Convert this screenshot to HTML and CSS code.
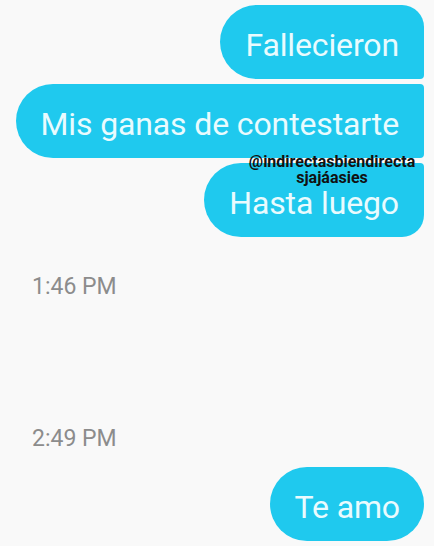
FILE: index.html
```html
<!DOCTYPE html>
<html lang="es">
<head>
<meta charset="utf-8">
<title>Chat</title>
<link rel="stylesheet" href="styles.css">
</head>
<body>
<main class="chat">
  <div class="group">
    <div class="bubble first"><span class="msg">Fallecieron</span></div>
    <div class="bubble middle"><span class="msg">Mis ganas de contestarte</span></div>
    <div class="bubble last"><span class="msg">Hasta luego</span></div>
    <div class="watermark">
      <div class="wm-line">@indirectasbiendirecta</div>
      <div class="wm-line">sjajáasies</div>
    </div>
  </div>
  <div class="time time-a">1:46 PM</div>
  <div class="time time-b">2:49 PM</div>
  <div class="group">
    <div class="bubble single"><span class="msg">Te amo</span></div>
  </div>
</main>
</body>
</html>
```
FILE: styles.css
```css
html, body {
  margin: 0;
  padding: 0;
  background: #f9f9f9;
}
.chat {
  font-family: Roboto, "Noto Sans", "Liberation Sans", sans-serif;
  padding: 5px 10px 0 0;
  display: flex;
  flex-direction: column;
}
.group {
  position: relative;
  display: flex;
  flex-direction: column;
  align-items: flex-end;
  gap: 5px;
}
.bubble {
  box-sizing: border-box;
  height: 74px;
  display: flex;
  align-items: center;
  padding: 6px 25px 0 25px;
  background: #1fc9ee;
  color: #e9fbfe;
  font-size: 32px;
  letter-spacing: -0.13px;
  border-radius: 37px;
}
.msg {
  line-height: 24px;
  white-space: nowrap;
}
.first { border-radius: 37px 22px 4px 37px; }
.middle { border-radius: 37px 4px 4px 37px; }
.last { border-radius: 37px 4px 22px 37px; }
.single { border-radius: 37px; padding-left: 25px; padding-right: 24px; }
.watermark {
  position: absolute;
  left: 236px;
  top: 149px;
  width: 192px;
  text-align: center;
  font-family: Roboto, "Liberation Sans", sans-serif;
  font-weight: bold;
  font-size: 16px;
  color: #111;
}
.wm-line {
  line-height: 16px;
  height: 16px;
}
.time {
  font-size: 23px;
  line-height: 28px;
  color: #8c8c8c;
  padding-left: 32px;
}
.time-a { margin-top: 36px; }
.time-b { margin-top: 124px; margin-bottom: 14px; }
```
